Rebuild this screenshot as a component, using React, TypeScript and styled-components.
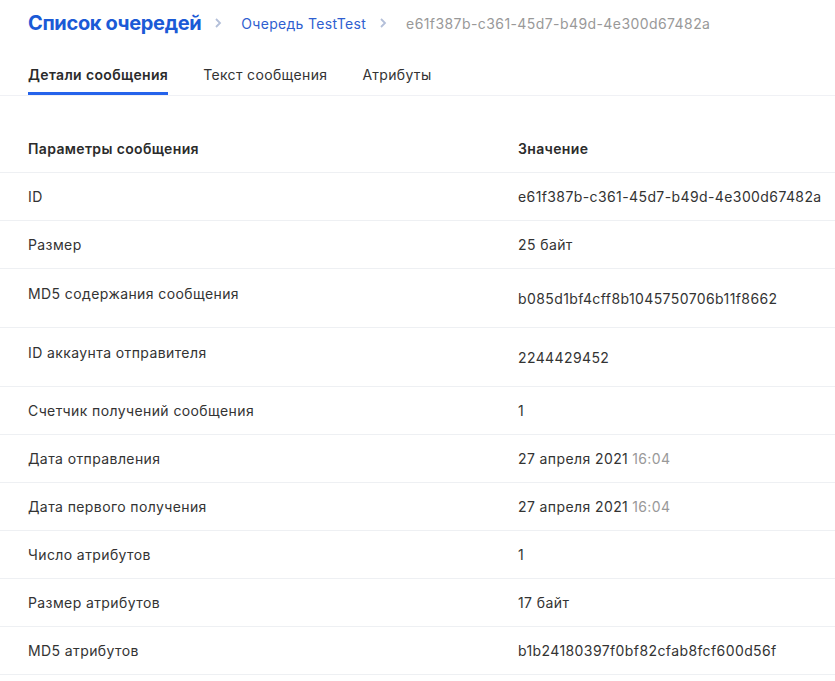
import { createGlobalStyle } from 'styled-components'
import styled from 'styled-components'

const GlobalStyle = createGlobalStyle`
	body {
		margin: 0;
		background: #fff;
		font-family: Inter, 'Noto Sans', sans-serif;
		color: #333;
	}
`

const Page = styled.div`
	width: 835px;
`

const Breadcrumbs = styled.div`
	display: flex;
	align-items: center;
	height: 46px;
	padding: 0 28px;
`

const Title = styled.span`
	font-size: 20px;
	font-weight: 700;
	color: #1b5ad6;
	letter-spacing: -0.35px;
`

const Crumb = styled.span<{ $muted?: boolean }>`
	font-size: 14px;
	letter-spacing: ${(p) => (p.$muted ? 0.42 : 0.3)}px;
	color: ${(p) => (p.$muted ? '#999' : '#2f5fd0')};
`

const Chevron = styled.svg`
	width: 10px;
	height: 10px;
	margin: 0 18px 0 12px;
	flex: none;
`

const Tabs = styled.div`
	display: flex;
	gap: 35px;
	padding: 0 28px;
	margin-top: 9px;
	border-bottom: 1px solid #f0f1f5;
`

const Tab = styled.div<{ $active?: boolean }>`
	font-size: 14px;
	line-height: 17px;
	letter-spacing: 0.35px;
	padding: 11px 0 9px;
	color: ${(p) => (p.$active ? '#2b2b2b' : '#333')};
	font-weight: ${(p) => (p.$active ? 600 : 400)};
	border-bottom: 3px solid ${(p) => (p.$active ? '#2563eb' : 'transparent')};
`

const Table = styled.div`
	margin-top: 29px;
`

const Row = styled.div<{ $tall?: boolean }>`
	display: grid;
	grid-template-columns: 490px 1fr;
	padding: 0 0 0 28px;
	min-height: ${(p) => (p.$tall ? 58 : 47)}px;
	border-bottom: 1px solid #eef0f3;
	font-size: 14px;
	line-height: 17px;
	letter-spacing: 0.4px;
`

const HeadRow = styled(Row)`
	font-weight: 600;
	color: #2b2b2b;
	letter-spacing: 0.35px;
`

const Cell = styled.div<{ $top?: boolean }>`
	display: flex;
	align-items: ${(p) => (p.$top ? 'flex-start' : 'center')};
	padding-top: ${(p) => (p.$top ? 16 : 0)}px;
`

const Time = styled.span`
	color: #999;
	margin-left: 4px;
`

const Arrow = () => (
	<Chevron viewBox="0 0 10 10">
		<path d="M3 1l4 4-4 4" fill="none" stroke="#b3bfd9" strokeWidth="1.8" />
	</Chevron>
)

const rows: { name: string; value: React.ReactNode; tall?: boolean }[] = [
	{ name: 'ID', value: 'e61f387b-c361-45d7-b49d-4e300d67482a' },
	{ name: 'Размер', value: '25 байт' },
	{ name: 'MD5 содержания сообщения', value: 'b085d1bf4cff8b1045750706b11f8662', tall: true },
	{ name: 'ID аккаунта отправителя', value: '2244429452', tall: true },
	{ name: 'Счетчик получений сообщения', value: '1' },
	{
		name: 'Дата отправления',
		value: (
			<>
				27 апреля 2021<Time>16:04</Time>
			</>
		),
	},
	{
		name: 'Дата первого получения',
		value: (
			<>
				27 апреля 2021<Time>16:04</Time>
			</>
		),
	},
	{ name: 'Число атрибутов', value: '1' },
	{ name: 'Размер атрибутов', value: '17 байт' },
	{ name: 'MD5 атрибутов', value: 'b1b24180397f0bf82cfab8fcf600d56f' },
]

export default function App() {
	return (
		<Page>
			<GlobalStyle />
			<Breadcrumbs>
				<Title>Список очередей</Title>
				<Arrow />
				<Crumb>Очередь TestTest</Crumb>
				<Arrow />
				<Crumb $muted>e61f387b-c361-45d7-b49d-4e300d67482a</Crumb>
			</Breadcrumbs>
			<Tabs>
				<Tab $active>Детали сообщения</Tab>
				<Tab>Текст сообщения</Tab>
				<Tab>Атрибуты</Tab>
			</Tabs>
			<Table>
				<HeadRow>
					<Cell>Параметры сообщения</Cell>
					<Cell>Значение</Cell>
				</HeadRow>
				{rows.map((r) => (
					<Row key={r.name} $tall={r.tall}>
						<Cell $top={r.tall}>{r.name}</Cell>
						<Cell>{r.value}</Cell>
					</Row>
				))}
			</Table>
		</Page>
	)
}
